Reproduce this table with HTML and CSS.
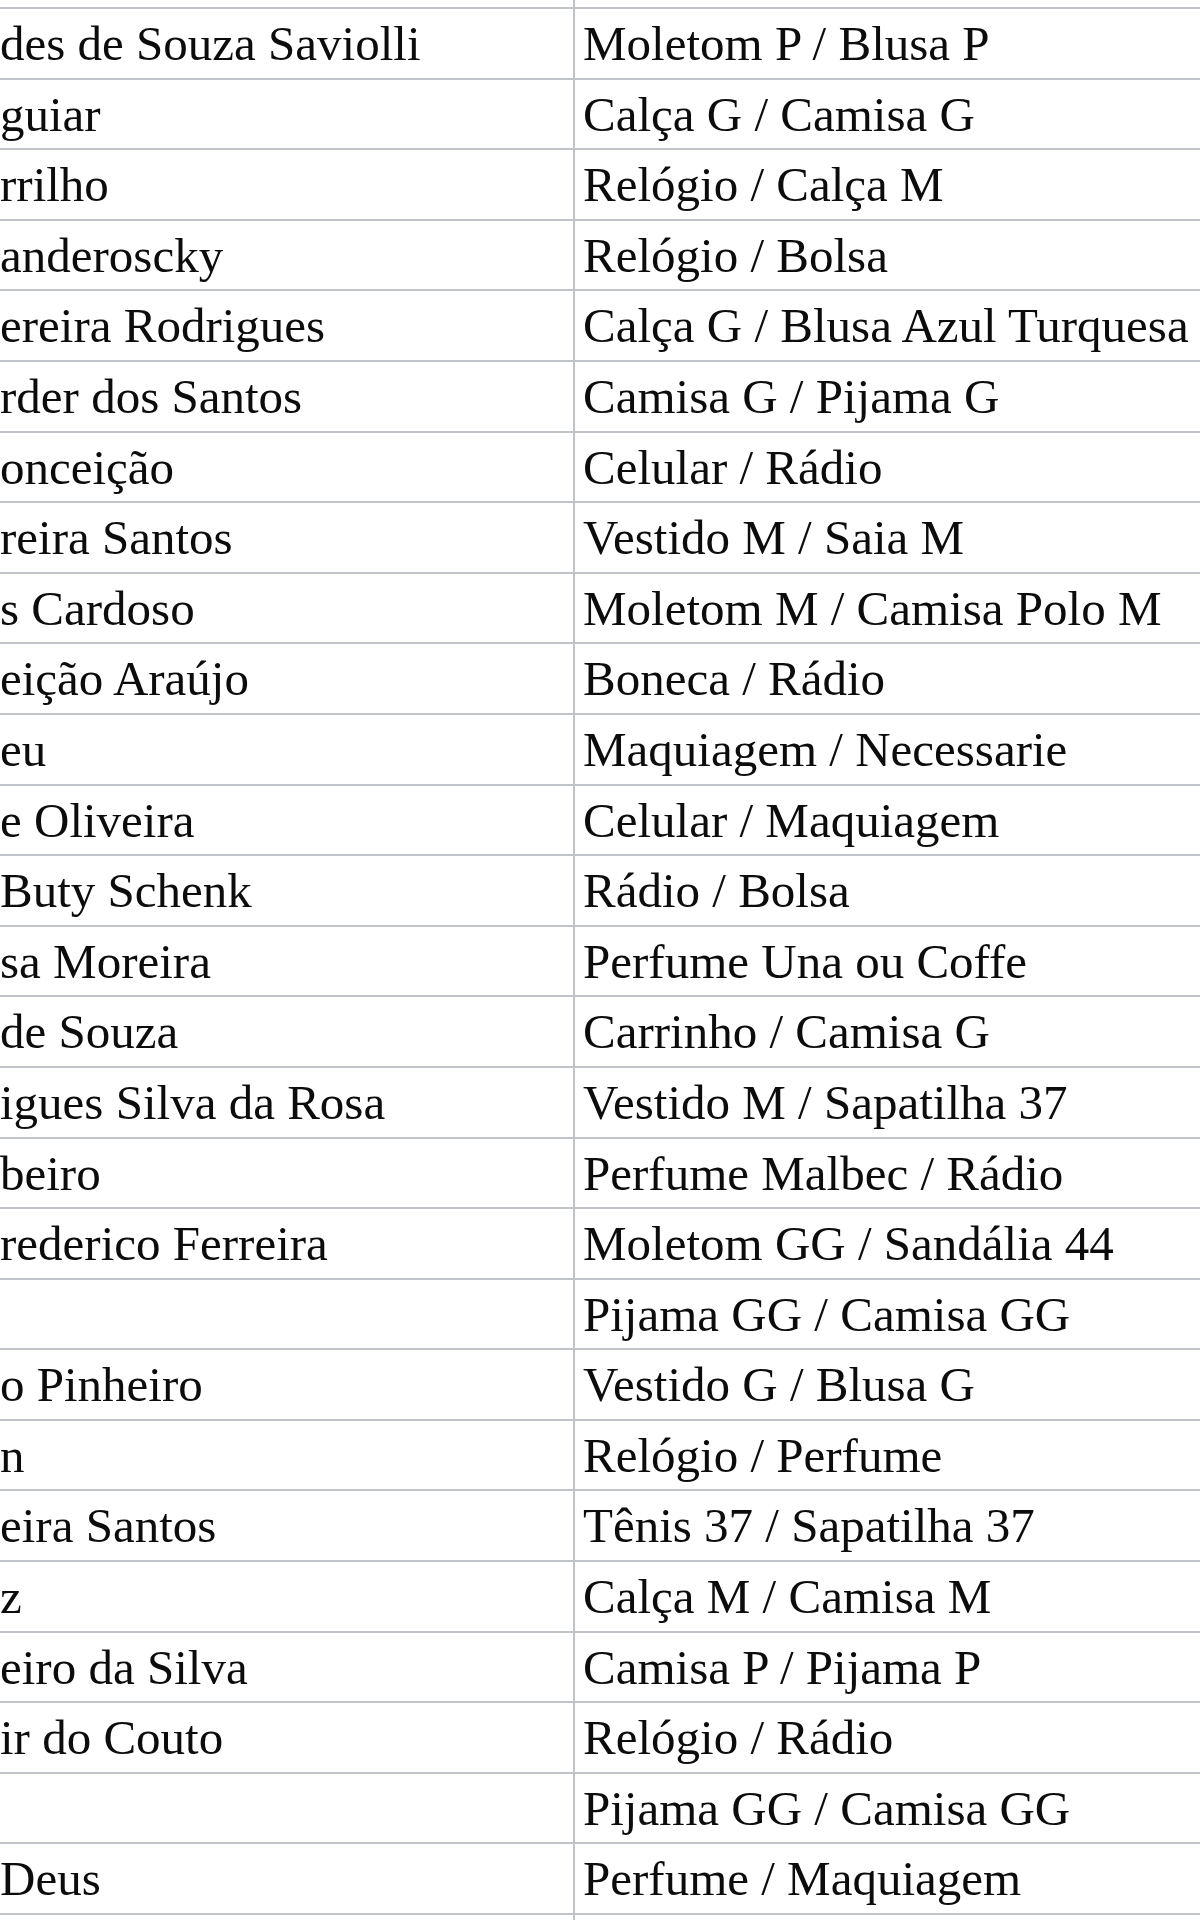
FILE: index.html
```html
<!DOCTYPE html>
<html lang="pt">
<head>
<meta charset="utf-8">
<title>Lista</title>
<link rel="stylesheet" href="styles.css">
</head>
<body>
<div class="sheet">
  <div class="row top"><div class="cell name"></div><div class="cell gift"></div></div>
  <div class="row"><div class="cell name">des de Souza Saviolli</div><div class="cell gift">Moletom P / Blusa P</div></div>
  <div class="row"><div class="cell name">guiar</div><div class="cell gift">Calça G / Camisa G</div></div>
  <div class="row"><div class="cell name">rrilho</div><div class="cell gift">Relógio / Calça M</div></div>
  <div class="row"><div class="cell name">anderoscky</div><div class="cell gift">Relógio / Bolsa</div></div>
  <div class="row"><div class="cell name">ereira Rodrigues</div><div class="cell gift">Calça G / Blusa Azul Turquesa</div></div>
  <div class="row"><div class="cell name">rder dos Santos</div><div class="cell gift">Camisa G / Pijama G</div></div>
  <div class="row"><div class="cell name">onceição</div><div class="cell gift">Celular / Rádio</div></div>
  <div class="row"><div class="cell name">reira Santos</div><div class="cell gift">Vestido M / Saia M</div></div>
  <div class="row"><div class="cell name">s Cardoso</div><div class="cell gift">Moletom M / Camisa Polo M</div></div>
  <div class="row"><div class="cell name">eição Araújo</div><div class="cell gift">Boneca / Rádio</div></div>
  <div class="row"><div class="cell name">eu</div><div class="cell gift">Maquiagem / Necessarie</div></div>
  <div class="row"><div class="cell name">e Oliveira</div><div class="cell gift">Celular / Maquiagem</div></div>
  <div class="row"><div class="cell name">Buty Schenk</div><div class="cell gift">Rádio / Bolsa</div></div>
  <div class="row"><div class="cell name">sa Moreira</div><div class="cell gift">Perfume Una ou Coffe</div></div>
  <div class="row"><div class="cell name">de Souza</div><div class="cell gift">Carrinho / Camisa G</div></div>
  <div class="row"><div class="cell name">igues Silva da Rosa</div><div class="cell gift">Vestido M / Sapatilha 37</div></div>
  <div class="row"><div class="cell name">beiro</div><div class="cell gift">Perfume Malbec / Rádio</div></div>
  <div class="row"><div class="cell name">rederico Ferreira</div><div class="cell gift">Moletom GG / Sandália 44</div></div>
  <div class="row"><div class="cell name"></div><div class="cell gift">Pijama GG / Camisa GG</div></div>
  <div class="row"><div class="cell name">o Pinheiro</div><div class="cell gift">Vestido G / Blusa G</div></div>
  <div class="row"><div class="cell name">n</div><div class="cell gift">Relógio / Perfume</div></div>
  <div class="row"><div class="cell name">eira Santos</div><div class="cell gift">Tênis 37 / Sapatilha 37</div></div>
  <div class="row"><div class="cell name">z</div><div class="cell gift">Calça M / Camisa M</div></div>
  <div class="row"><div class="cell name">eiro da Silva</div><div class="cell gift">Camisa P / Pijama P</div></div>
  <div class="row"><div class="cell name">ir do Couto</div><div class="cell gift">Relógio / Rádio</div></div>
  <div class="row"><div class="cell name"></div><div class="cell gift">Pijama GG / Camisa GG</div></div>
  <div class="row"><div class="cell name">Deus</div><div class="cell gift">Perfume / Maquiagem</div></div>
  <div class="row bottom"><div class="cell name"></div><div class="cell gift"></div></div>
</div>
</body>
</html>
```
FILE: styles.css
```css
html, body {
  margin: 0;
  padding: 0;
  background: #ffffff;
}
body {
  width: 1200px;
  height: 1920px;
  overflow: hidden;
}
.sheet {
  font-family: "Liberation Serif", "Times New Roman", serif;
  font-size: 49px;
  color: #0c0c0c;
  display: flex;
  flex-direction: column;
}
.row {
  display: grid;
  grid-template-columns: 575px 1fr;
  height: 70.6px;
  box-sizing: border-box;
  border-top: 2px solid #c0c4c8;
}
.row.top {
  height: 7px;
  border-top: none;
}
.row.bottom {
  height: 10px;
}
.cell {
  white-space: nowrap;
  overflow: hidden;
  padding-top: 7px;
  line-height: 55px;
}
.cell.name {
  border-right: 2px solid #c0c4c8;
  padding-left: 0;
}
.cell.gift {
  padding-left: 8px;
}
```
